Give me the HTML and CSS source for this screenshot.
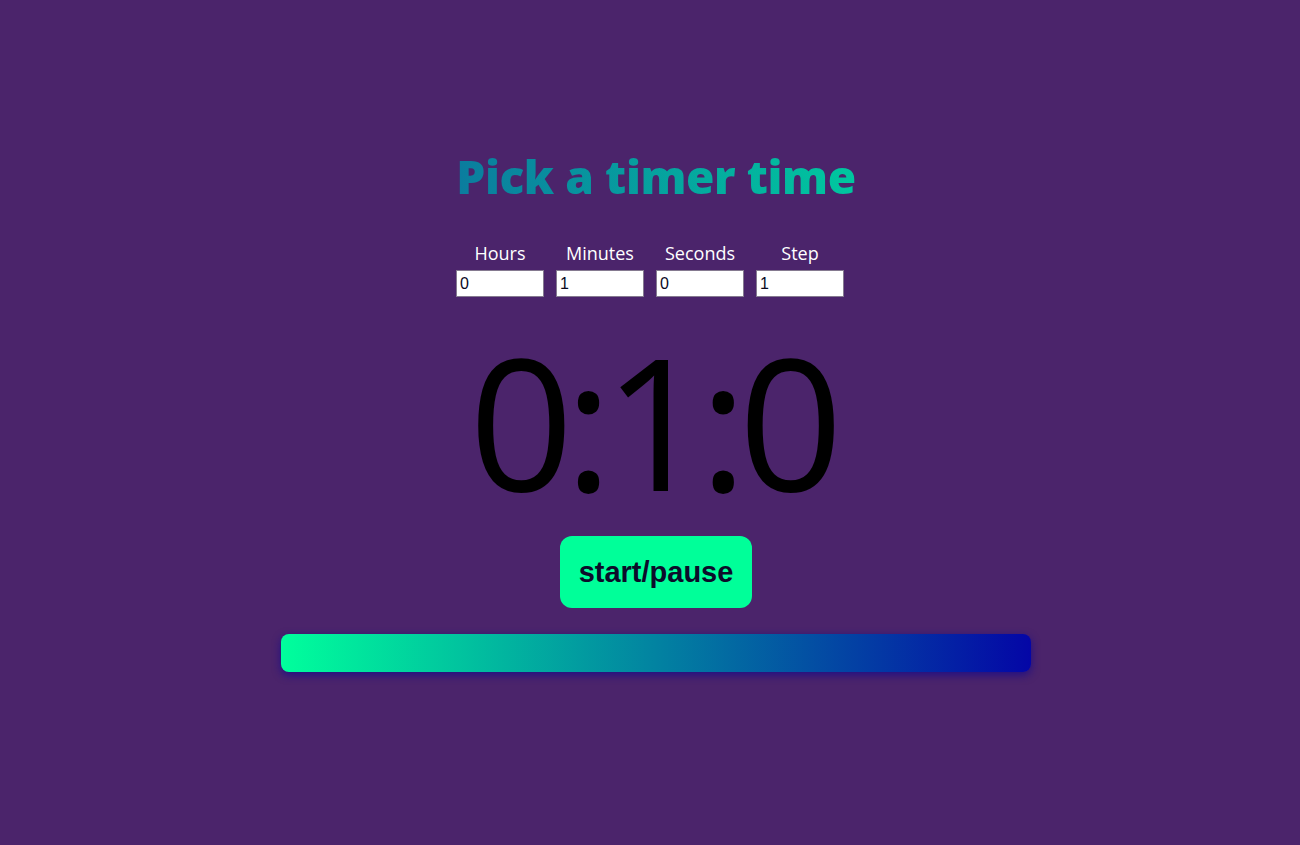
FILE: index.html
```html
<!DOCTYPE html>
<html>
<head>
<meta charset="utf-8">
<link rel="stylesheet" href="styles.css">
</head>
<body>
<main class="app">
  <h1 class="title">Pick a timer time</h1>
  <div class="fields">
    <label class="field"><span class="field-label">Hours</span><input class="field-input" type="text" value="0"></label>
    <label class="field"><span class="field-label">Minutes</span><input class="field-input" type="text" value="1"></label>
    <label class="field"><span class="field-label">Seconds</span><input class="field-input" type="text" value="0"></label>
    <label class="field"><span class="field-label">Step</span><input class="field-input" type="text" value="1"></label>
  </div>
  <div class="clock">0:1:0</div>
  <button class="toggle">start/pause</button>
  <div class="bar"></div>
</main>
</body>
</html>
```

FILE: styles.css
```css
html, body {
  margin: 0;
  padding: 0;
  height: 100%;
}
body {
  background: #4b246b;
  font-family: "Open Sans", "Noto Sans", sans-serif;
}
.app {
  display: flex;
  flex-direction: column;
  align-items: center;
  padding-top: 146px;
  padding-left: 12px;
}
.title {
  margin: 0;
  font-family: "Open Sans", sans-serif;
  font-weight: 800;
  font-size: 46px;
  line-height: 60px;
  letter-spacing: -0.4px;
  background: linear-gradient(90deg, #0b7c9e, #00c79f);
  -webkit-background-clip: text;
  background-clip: text;
  color: transparent;
}
.fields {
  display: flex;
  gap: 12px;
  margin-top: 35px;
  margin-right: 12px;
}
.field {
  display: flex;
  flex-direction: column;
  align-items: center;
  width: 88px;
}
.field-label {
  color: #ffffff;
  font-size: 18px;
  line-height: 24px;
  margin-bottom: 5px;
}
.field-input {
  box-sizing: border-box;
  width: 88px;
  height: 27px;
  margin: 0;
  padding: 1px 3px;
  border: 1px solid #857a90;
  background: #fff;
  font-family: "Liberation Sans", Arial, sans-serif;
  font-size: 16px;
  color: #0a0a1e;
  outline: none;
}
.clock {
  font-family: "Open Sans", "Noto Sans", sans-serif;
  font-weight: 400;
  font-size: 183px;
  line-height: 216px;
  letter-spacing: -9px;
  margin-right: 9px;
  color: #000;
  margin-top: 15px;
}
.toggle {
  width: 192px;
  height: 72px;
  margin-top: 8px;
  border: none;
  border-radius: 12px;
  background: #00ff99;
  color: #0c0c2a;
  font-family: "Liberation Sans", Arial, sans-serif;
  font-weight: bold;
  font-size: 29px;
  cursor: pointer;
}
.bar {
  width: 750px;
  height: 38px;
  margin-top: 26px;
  border-radius: 8px;
  background: linear-gradient(90deg, #00ff9c, #0406a6);
  box-shadow: 0 3px 8px rgba(20, 10, 140, 0.8);
}
```
